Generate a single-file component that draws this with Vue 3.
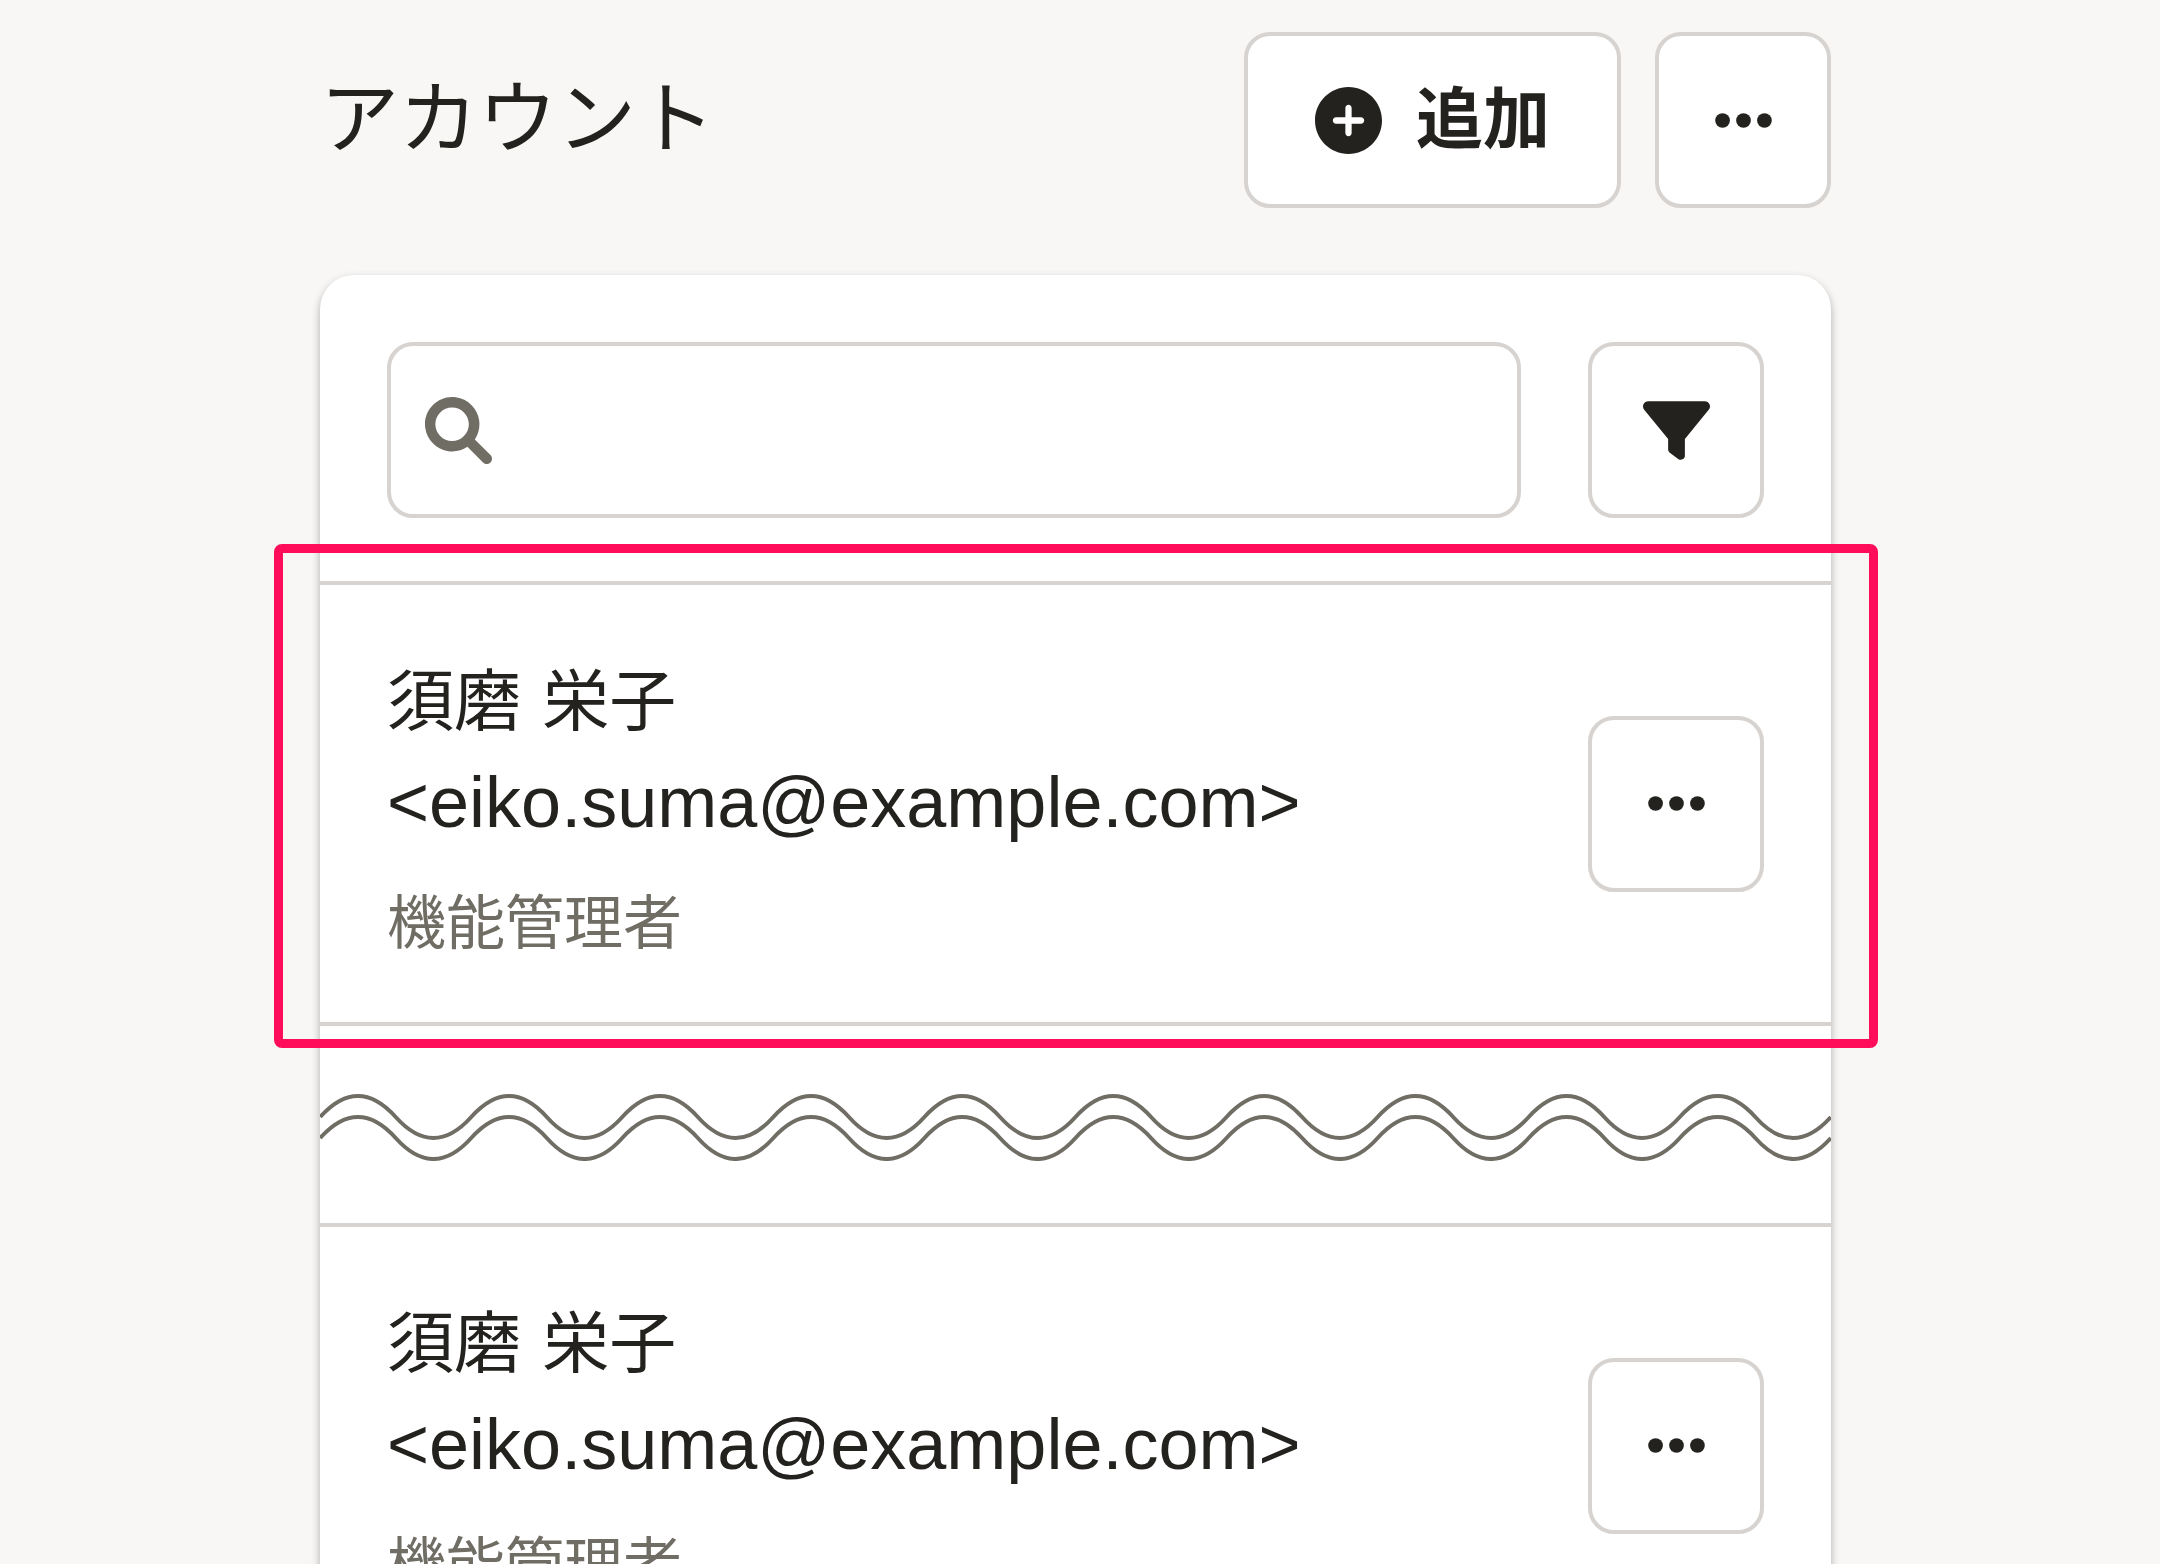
<script setup>
import { ref } from 'vue'

const query = ref('')

const accounts = [
  { id: 1, name: '須磨 栄子', email: 'eiko.suma@example.com', role: '機能管理者', highlighted: true },
  { id: 2, name: '須磨 栄子', email: 'eiko.suma@example.com', role: '機能管理者', highlighted: false },
]

const periods = 10
const wave = (y) => `M0 ${y}` + ' q37.75 -42 75.5 0 t75.5 0'.repeat(periods)
</script>

<template>
  <main class="page">
    <header class="header">
      <h1 class="title">アカウント</h1>
      <div class="actions">
        <button type="button" class="button button-add">
          <svg class="icon" viewBox="0 0 512 512" aria-hidden="true">
            <path d="M256 0C114.6 0 0 114.6 0 256s114.6 256 256 256s256-114.6 256-256S397.4 0 256 0zM352 280H280V352c0 13.2-10.8 24-24 24s-24-10.8-24-24V280H160c-13.2 0-24-10.8-24-24s10.8-24 24-24h72V160c0-13.2 10.8-24 24-24s24 10.8 24 24v72H352c13.2 0 24 10.8 24 24S365.2 280 352 280z" />
          </svg>
          <span>追加</span>
        </button>
        <button type="button" class="button button-square" aria-label="その他の操作">
          <svg class="icon" viewBox="0 0 512 512" aria-hidden="true">
            <circle cx="96" cy="256" r="56" />
            <circle cx="256" cy="256" r="56" />
            <circle cx="416" cy="256" r="56" />
          </svg>
        </button>
      </div>
    </header>

    <section class="card">
      <form class="toolbar" role="search" @submit.prevent>
        <label class="search">
          <svg class="icon" viewBox="0 0 512 512" role="img" aria-label="検索">
            <path d="M500.3 443.7l-119.7-119.7c27.22-40.41 40.65-90.9 33.46-144.7C401.8 87.79 326.8 13.32 235.2 1.723C99.01-15.51-15.51 99.01 1.724 235.2c11.6 91.64 86.08 166.7 177.6 178.9c53.8 7.189 104.3-6.236 144.7-33.46l119.7 119.7c15.62 15.62 40.95 15.62 56.57 0C515.9 484.7 515.9 459.3 500.3 443.7zM79.1 208c0-70.58 57.42-128 128-128s128 57.42 128 128c0 70.58-57.42 128-128 128S79.1 278.6 79.1 208z" />
          </svg>
          <input v-model="query" class="search-input" type="text" />
        </label>
        <button type="button" class="button button-square" aria-label="絞り込み">
          <svg class="icon" viewBox="0 0 512 512" aria-hidden="true">
            <path d="M3.853 54.87C10.47 40.9 24.54 32 40 32H472C487.5 32 501.5 40.9 508.1 54.87C514.8 68.84 512.7 85.37 502.1 97.33L320 320.9V448C320 460.1 313.2 471.2 302.3 476.6C291.5 482 278.5 480.9 268.8 473.6L204.8 425.6C196.7 419.6 192 410.1 192 400V320.9L9.042 97.33C-.745 85.37-2.765 68.84 3.853 54.87z" />
          </svg>
        </button>
      </form>

      <template v-for="(account, index) in accounts" :key="account.id">
        <div v-if="index > 0" class="omission">
          <svg class="waves" viewBox="0 0 1510 68" aria-hidden="true">
            <path :d="wave(24)" />
            <path :d="wave(45)" />
          </svg>
        </div>
        <article class="account" :class="{ highlighted: account.highlighted }">
          <div class="details">
            <p class="name">{{ account.name }}</p>
            <p class="email">&lt;{{ account.email }}&gt;</p>
            <p class="role">{{ account.role }}</p>
          </div>
          <button type="button" class="button button-square" aria-label="アカウントの操作">
            <svg class="icon" viewBox="0 0 512 512" aria-hidden="true">
              <circle cx="96" cy="256" r="56" />
              <circle cx="256" cy="256" r="56" />
              <circle cx="416" cy="256" r="56" />
            </svg>
          </button>
        </article>
      </template>
    </section>
  </main>
</template>

<style>
body {
  margin: 0;
  background: #f8f7f6;
}
</style>

<style scoped>
.page {
  box-sizing: border-box;
  height: 100vh;
  overflow: hidden;
  padding: 32px 329px 0 320px;
  background: #f8f7f6;
  color: #23221e;
  font-family: "DejaVu Sans", "Noto Sans CJK JP", sans-serif;
  font-size: 67px;
}

.header {
  display: flex;
  align-items: center;
  justify-content: space-between;
  margin-bottom: 67px;
}

.title {
  margin: 0;
  font-size: 79px;
  font-weight: 400;
  line-height: 100px;
}

.actions {
  display: flex;
  gap: 34px;
}

.button {
  box-sizing: border-box;
  display: flex;
  flex: none;
  align-items: center;
  justify-content: center;
  height: 176px;
  margin: 0;
  padding: 0;
  border: 4px solid #d6d3d0;
  border-radius: 26px;
  background: #fff;
  color: #23221e;
  font: inherit;
}

.button-add {
  gap: 34px;
  padding: 0 67px;
  font-weight: 700;
  line-height: 100px;
}

.button-square {
  width: 176px;
}

.icon {
  display: block;
  flex: none;
  width: 67px;
  height: 67px;
  fill: currentColor;
}

.card {
  border-radius: 34px;
  background: #fff;
  box-shadow: 0 4px 8px rgba(3, 3, 2, 0.3);
}

.toolbar {
  display: flex;
  gap: 67px;
  padding: 67px 67px 63px;
}

.search {
  box-sizing: border-box;
  display: flex;
  flex: 1;
  align-items: center;
  gap: 34px;
  height: 176px;
  padding: 0 34px;
  border: 4px solid #d6d3d0;
  border-radius: 26px;
  color: #706d65;
}

.search-input {
  flex: 1;
  min-width: 0;
  padding: 0;
  border: 0;
  outline: 0;
  background: transparent;
  color: #23221e;
  font: inherit;
  line-height: 100px;
}

.account {
  position: relative;
  display: flex;
  align-items: center;
  justify-content: space-between;
  padding: 67px;
  border-top: 4px solid #d6d3d0;
}

.highlighted::after {
  content: "";
  position: absolute;
  inset: -41px -47px -26px -46px;
  border: 9px solid #ff0d5b;
  border-radius: 8px;
  pointer-events: none;
}

.name,
.email,
.role {
  margin: 0;
  line-height: 100px;
}

.email {
  font-family: "Liberation Sans", Arial, sans-serif;
  font-size: 72px;
}

.role {
  margin-top: 40px;
  color: #706d65;
  font-size: 59px;
  line-height: 63px;
}

.omission {
  padding: 67px 0 62px;
  border-top: 4px solid #d6d3d0;
}

.waves {
  display: block;
  width: 100%;
  fill: none;
  stroke: #706d65;
  stroke-width: 4;
}
</style>
